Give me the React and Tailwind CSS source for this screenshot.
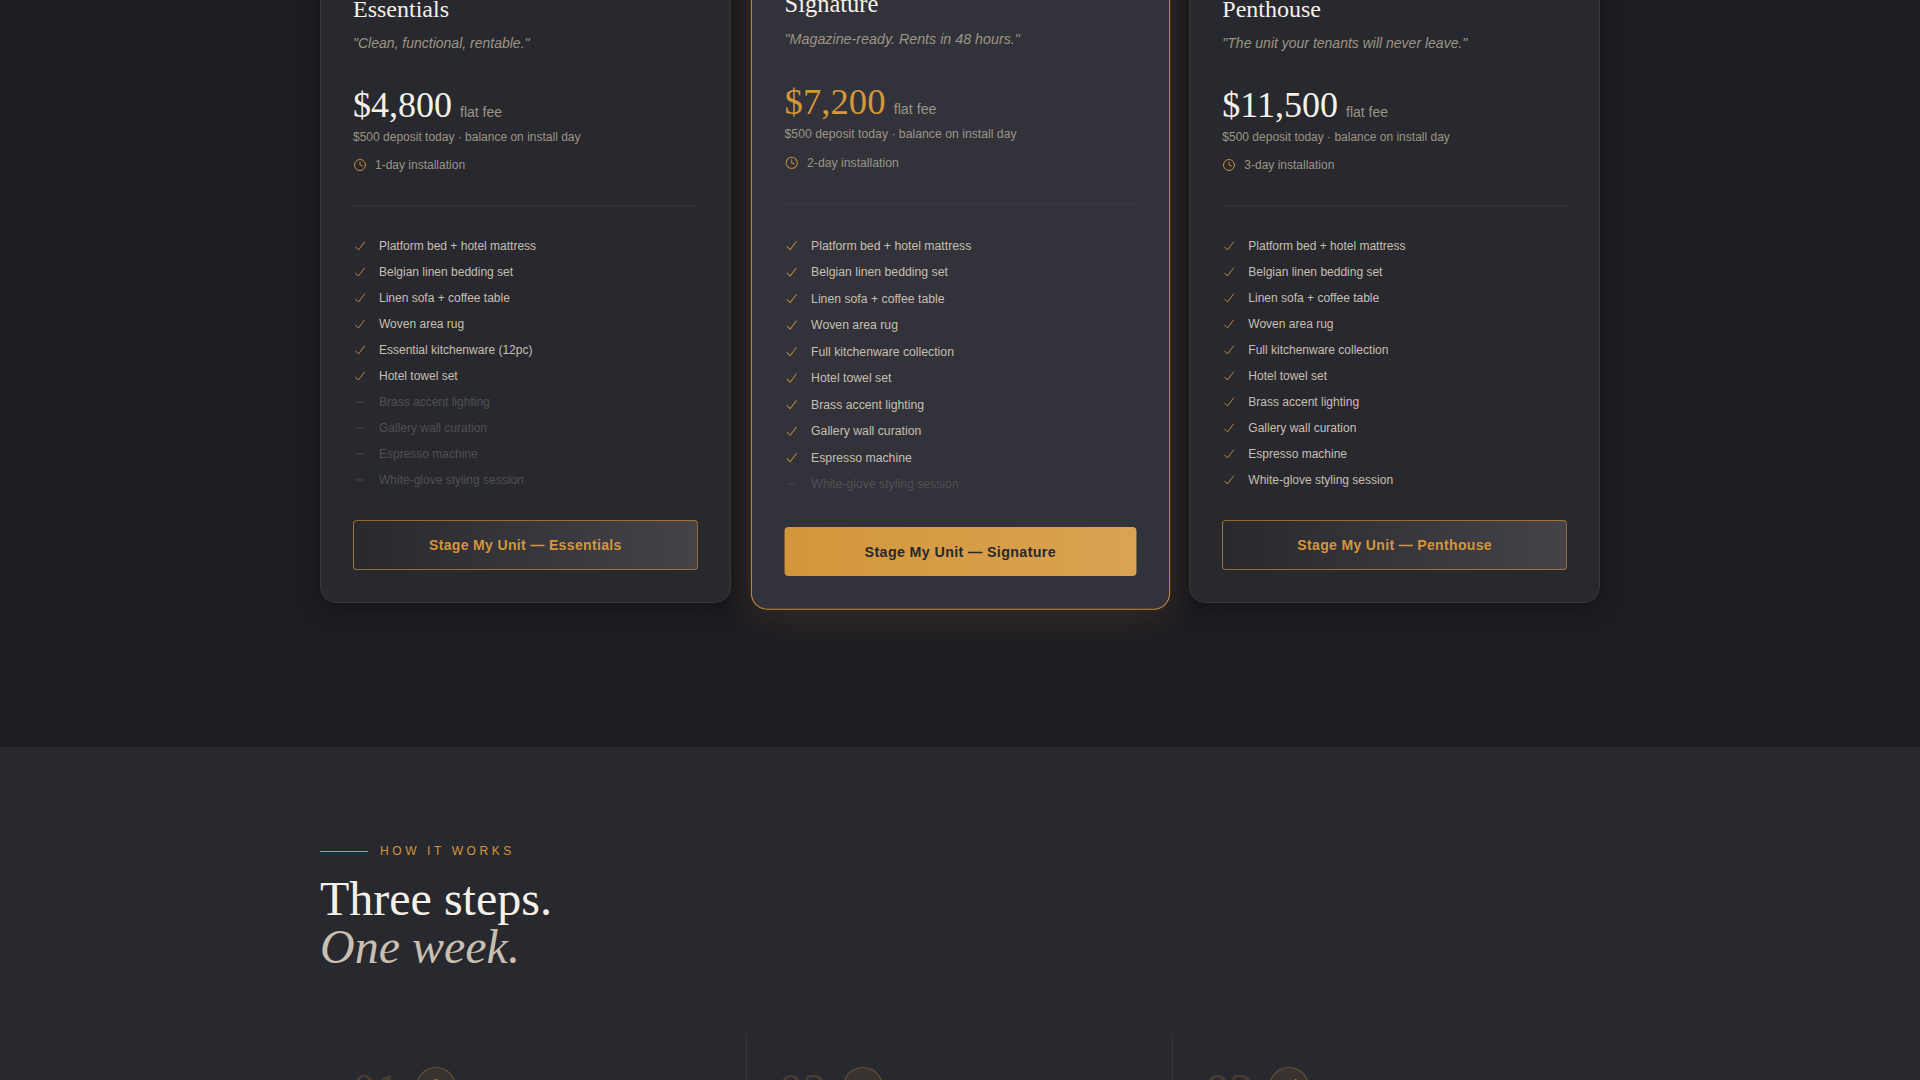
import React from 'react';
import { Key, Package, Truck } from 'lucide-react';

const features = [
    'Platform bed + hotel mattress',
    'Belgian linen bedding set',
    'Linen sofa + coffee table',
    'Woven area rug',
    'Full kitchenware collection',
    'Hotel towel set',
    'Brass accent lighting',
    'Gallery wall curation',
    'Espresso machine',
    'White-glove styling session'
];

const packages = [
    {
        name: 'Essentials',
        tagline: '"Clean, functional, rentable."',
        price: '$4,800',
        install: '1-day installation',
        included: 6,
        kitchenware: 'Essential kitchenware (12pc)'
    },
    {
        name: 'Signature',
        tagline: '"Magazine-ready. Rents in 48 hours."',
        price: '$7,200',
        install: '2-day installation',
        included: 9,
        featured: true
    },
    {
        name: 'Penthouse',
        tagline: '"The unit your tenants will never leave."',
        price: '$11,500',
        install: '3-day installation',
        included: 10
    }
];

const steps = [
    { number: '01', Icon: Package },
    { number: '02', Icon: Truck },
    { number: '03', Icon: Key }
];

const serif = "font-['Liberation_Serif',serif]";

const FeatureItem = ({ label, included }) => (
    <li className={`flex items-center gap-3 text-xs ${included ? 'text-[#c8bfb0]' : 'text-[#505053]'}`}>
        {included ? (
            <svg width="14" height="14" viewBox="0 0 14 14" fill="none" className="shrink-0" aria-hidden="true">
                <path d="M2.5 8L5.5 11L11.5 3" stroke="#b8863c" strokeWidth="1" strokeLinecap="round" strokeLinejoin="round" />
            </svg>
        ) : (
            <svg width="14" height="14" viewBox="0 0 14 14" fill="none" className="shrink-0" aria-hidden="true">
                <path d="M3 7H11" stroke="#45454a" strokeWidth="1" strokeLinecap="round" />
            </svg>
        )}
        <span>{label}</span>
    </li>
);

const PackageCard = ({ pkg }) => {
    const cardStyle = pkg.featured
        ? 'scale-[1.02] border-[#c48c3a] bg-[#32323a] shadow-[0_8px_40px_rgba(212,150,58,0.12)]'
        : 'border-[#35353a] bg-[#28292e] shadow-[0_4px_24px_rgba(0,0,0,0.4)]';
    const buttonStyle = pkg.featured
        ? 'bg-linear-to-r from-[#d4963a] to-[#d9a352] text-[#28292e]'
        : 'border border-[#d4963a]/60 bg-linear-to-r from-[#28292e] to-[#454349] text-[#d4963a]';

    return (
        <article className={`flex flex-col rounded-2xl border px-8 pb-8 pt-14 ${cardStyle}`}>
            <h3 className={`${serif} mb-2 text-2xl text-[#f5f0e8]`}>{pkg.name}</h3>
            <p className="mb-8 text-sm italic text-[#9c9484]">{pkg.tagline}</p>

            <div className="mb-1 flex items-baseline gap-2">
                <span className={`${serif} text-4xl ${pkg.featured ? 'text-[#d4963a]' : 'text-[#f5f0e8]'}`}>{pkg.price}</span>
                <span className="text-sm text-[#9c9484]">flat fee</span>
            </div>
            <p className="mb-3 text-xs text-[#9c9484]">$500 deposit today · balance on install day</p>
            <div className="flex items-center gap-2 text-xs text-[#9c9484]">
                <svg width="14" height="14" viewBox="0 0 14 14" fill="none" stroke="#c48c3a" strokeWidth="1" strokeLinecap="round" aria-hidden="true">
                    <circle cx="7" cy="7" r="5.5" />
                    <path d="M7 4V7L9.5 8" />
                </svg>
                <span>{pkg.install}</span>
            </div>

            <hr className={`my-8 ${pkg.featured ? 'border-[#3d3d44]' : 'border-[#35353a]'}`} />

            <ul className="mb-8 flex flex-1 flex-col gap-[10px]">
                {features.map((feature, i) => (
                    <FeatureItem
                        key={feature}
                        label={i === 4 && pkg.kitchenware ? pkg.kitchenware : feature}
                        included={i < pkg.included}
                    />
                ))}
            </ul>

            <button type="button" className={`w-full cursor-pointer rounded py-[14px] text-sm font-bold tracking-wide ${buttonStyle}`}>
                Stage My Unit — {pkg.name}
            </button>
        </article>
    );
};

const App = () => {
    return (
        <main className="h-screen overflow-hidden bg-[#28292e] font-['Liberation_Sans',Arial,sans-serif]">
            {/* Packages */}
            <section className="overflow-hidden bg-[#1e1d22] pb-36">
                <div className="mx-auto -mt-16 grid max-w-7xl grid-cols-3 gap-6">
                    {packages.map((pkg) => (
                        <PackageCard key={pkg.name} pkg={pkg} />
                    ))}
                </div>
            </section>

            {/* How it works */}
            <section className="bg-[#28292e] pt-24">
                <div className="mx-auto max-w-7xl">
                    <div className="mb-4 flex items-center gap-3">
                        <span className="h-px w-12 bg-[#d4963a]" />
                        <span className="text-xs uppercase tracking-[0.3em] text-[#d4963a]">How it works</span>
                    </div>
                    <h2 className={`${serif} mb-16 text-5xl text-[#f5f0e8]`}>
                        Three steps.
                        <br />
                        <em className="text-[#c8bfb0]">One week.</em>
                    </h2>

                    <div className="grid grid-cols-3 divide-x divide-[#35353a]">
                        {steps.map(({ number, Icon }) => (
                            <div key={number} className="flex items-start gap-4 p-8">
                                <span className={`${serif} text-5xl text-[#d4963a]/20`}>{number}</span>
                                <span className="flex size-10 items-center justify-center rounded-full border border-[#d4963a]/30 bg-[#d4963a]/10 text-[#d4963a]/70">
                                    <Icon size={18} strokeWidth={1.5} />
                                </span>
                            </div>
                        ))}
                    </div>
                </div>
            </section>
        </main>
    );
};

export default App;
